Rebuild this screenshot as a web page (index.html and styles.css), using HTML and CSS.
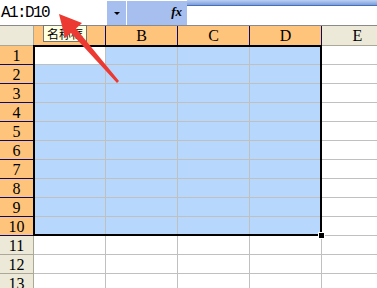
FILE: index.html
```html
<!DOCTYPE html>
<html lang="zh-CN">
<head>
  <meta charset="UTF-8">
  <title>名称框</title>
  <link rel="stylesheet" href="styles.css">
</head>
<body>

  <div class="formula-bar">
    <div class="name-box">A1:D10</div>
    <div class="fx-group">
      <div class="drop"><span class="caret"></span></div>
      <div class="fx">fx</div>
    </div>
    <div class="formula-right">
      <div class="toolbar-strip"></div>
      <div class="formula-input"></div>
    </div>
  </div>

  <div class="sheet" id="sheet"></div>

  <!-- overlays -->
  <div class="selection"></div>
  <div class="fill-handle"></div>
  <div class="tooltip">名称框</div>
  <svg class="arrow" width="130" height="90" viewBox="0 0 130 90">
    <polygon points="59,14 82,23 76,28.5 119,81 117,83 71,33 65,38" fill="#ec3a32"/>
  </svg>

  <script>
    var cols = ['A', 'B', 'C', 'D', 'E'];
    var sheet = document.getElementById('sheet');

    function cell(cls, text) {
      var d = document.createElement('div');
      d.className = cls;
      if (text) d.textContent = text;
      sheet.appendChild(d);
    }

    // header row
    cell('hd corner');
    cols.forEach(function(c, i) {
      cell(i < 4 ? 'hd sel' : 'hd', c);
    });

    // rows 1-13
    for (var r = 1; r <= 13; r++) {
      var inSel = r <= 10;
      cell(inSel ? 'rh sel' : 'rh', String(r));
      for (var i = 0; i < 5; i++) {
        var cls = 'c';
        if (inSel && i < 4) cls += (r === 1 && i === 0) ? ' active' : ' sel';
        cell(cls);
      }
    }
  </script>

</body>
</html>
```

FILE: styles.css
```css
body {
  margin: 0;
  width: 377px;
  height: 288px;
  overflow: hidden;
  position: relative;
  background-color: #fff;
  font-family: "Liberation Serif", serif;
}

/* formula bar */
.formula-bar {
  display: flex;
  height: 25px;
  border-bottom: 1px solid #8a8a8a;
}
.name-box {
  width: 107px;
  padding: 4px 0 0 1px;
  box-sizing: border-box;
  font-family: "Liberation Mono", monospace;
  font-size: 16px;
  letter-spacing: -1.6px;
  line-height: 19px;
  color: #000;
  background-color: #fff;
}
.fx-group {
  display: flex;
  width: 80px;
  margin-top: 1px;
}
.drop {
  width: 19px;
  background-color: #a6bfef;
  border-right: 1px solid #fff;
  display: flex;
  align-items: center;
  justify-content: center;
}
.caret {
  width: 0;
  height: 0;
  border-left: 3px solid transparent;
  border-right: 3px solid transparent;
  border-top: 3px solid #000;
  margin-top: 1px;
}
.fx {
  flex: 1;
  background-color: #a6bfef;
  text-align: right;
  padding-right: 5px;
  font-style: italic;
  font-weight: bold;
  font-size: 13px;
  line-height: 22px;
  color: #000;
}
.formula-right {
  flex: 1;
  display: flex;
  flex-direction: column;
}
.toolbar-strip {
  height: 5px;
  background: linear-gradient(#bcd1f4, #7c9edb);
  border-bottom: 1px solid #4b6fb6;
}
.formula-input {
  flex: 1;
  background-color: #fff;
}

/* sheet grid */
.sheet {
  display: grid;
  grid-template-columns: 34px 72px 72px 72px 72px 72px;
  grid-template-rows: 20px;
  grid-auto-rows: 19px;
}
.sheet div {
  box-sizing: border-box;
  font-size: 16px;
  text-align: center;
}
.hd {
  background-color: #ece9d8;
  border-right: 1px solid #aca899;
  border-bottom: 1px solid #aca899;
  line-height: 20px;
}
.hd.sel {
  background-color: #fec47c;
  border-right-color: #0a0a6e;
  border-bottom-color: #0a0a6e;
}
.rh {
  background-color: #ece9d8;
  border-right: 1px solid #aca899;
  border-bottom: 1px solid #aca899;
  line-height: 19px;
}
.rh.sel {
  background-color: #fec47c;
  border-right-color: #0a0a6e;
  border-bottom-color: #0a0a6e;
}
.c {
  background-color: #fff;
  border-right: 1px solid #c0c0c0;
  border-bottom: 1px solid #c0c0c0;
}
.c.sel {
  background-color: #b7d7fc;
}

/* overlays */
.selection {
  position: absolute;
  left: 33px;
  top: 45px;
  width: 289px;
  height: 191px;
  box-sizing: border-box;
  border: 2px solid #000;
}
.fill-handle {
  position: absolute;
  left: 318px;
  top: 232px;
  width: 5px;
  height: 5px;
  background-color: #000;
  border: 1px solid #fff;
}
.tooltip {
  position: absolute;
  left: 43px;
  top: 25px;
  width: 44px;
  height: 17px;
  box-sizing: border-box;
  background-color: #ffffe1;
  border: 1px solid #767676;
  font-family: "Noto Sans CJK SC", sans-serif;
  font-size: 12px;
  line-height: 15px;
  text-align: center;
  color: #000;
}
.arrow {
  position: absolute;
  left: 0;
  top: 0;
}
```
